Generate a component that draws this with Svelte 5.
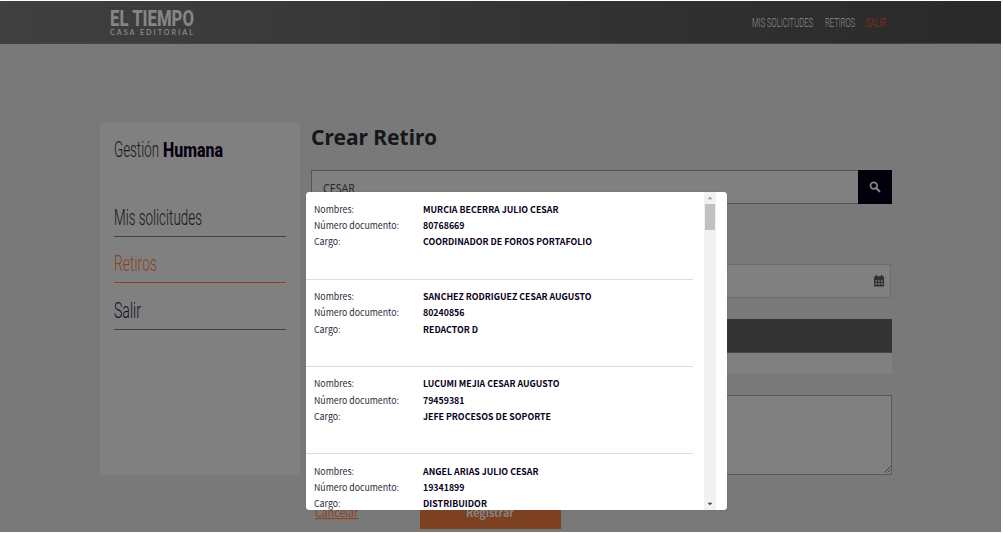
<script>
  const people = [
    { name: 'MURCIA BECERRA JULIO CESAR', nw: 135.5, doc: '80768669', job: 'COORDINADOR DE FOROS PORTAFOLIO', jw: 169 },
    { name: 'SANCHEZ RODRIGUEZ CESAR AUGUSTO', nw: 168.5, doc: '80240856', job: 'REDACTOR D', jw: 55 },
    { name: 'LUCUMI MEJIA CESAR AUGUSTO', nw: 136.5, doc: '79459381', job: 'JEFE PROCESOS DE SOPORTE', jw: 128 },
    { name: 'ANGEL ARIAS JULIO CESAR', nw: 115.5, doc: '19341899', job: 'DISTRIBUIDOR', jw: 64 },
  ];
</script>

{#snippet label(text, width, height, baseline, cls)}
  <svg class="label {cls}" {width} {height}>
    <text x="0" y={baseline} textLength={width} lengthAdjust="spacingAndGlyphs">{text}</text>
  </svg>
{/snippet}

<div class="page">
  <header>
    <div class="logo">
      {@render label('EL TIEMPO', 84, 19, 17, 'brand')}
      {@render label('CASA EDITORIAL', 85, 9, 6.8, 'tagline')}
    </div>
    <nav>
      {@render label('MIS SOLICITUDES', 61, 20, 14, 'nav')}
      {@render label('RETIROS', 30, 20, 14, 'nav')}
      {@render label('SALIR', 20, 20, 14, 'nav exit')}
    </nav>
  </header>

  <main>
    <aside>
      <h2>
        {@render label('Gestión', 45, 28, 21, 'side')}
        {@render label('Humana', 60, 28, 21, 'side strong')}
      </h2>
      <a class="item" href="#solicitudes">{@render label('Mis solicitudes', 88, 30, 21, 'side')}</a>
      <a class="item active" href="#retiros">{@render label('Retiros', 43, 30, 21, 'side')}</a>
      <a class="item navy" href="#salir">{@render label('Salir', 27, 30, 21, 'side')}</a>
    </aside>

    <section>
      <h1>{@render label('Crear Retiro', 126, 34, 22, 'title')}</h1>
      <div class="search">
        <div class="field">{@render label('CESAR', 32, 18, 13, 'value')}</div>
        <button aria-label="Buscar">
          <svg width="12" height="12" viewBox="0 0 12 12">
            <circle cx="4.8" cy="4.6" r="3.3" fill="none" stroke="#858585" stroke-width="1.8" />
            <path d="M7.2 7.1L10.4 10.3" stroke="#858585" stroke-width="2.1" stroke-linecap="round" />
          </svg>
        </button>
      </div>
      <div class="date">
        <svg width="10" height="12" viewBox="0 0 10 12">
          <path d="M0 2.2Q0 1.3 .9 1.3H1.8V0H3.2V1.3H6.8V0H8.2V1.3H9.1Q10 1.3 10 2.2V4H0ZM0 4H10V10.8Q10 11.6 9.2 11.6H.8Q0 11.6 0 10.8Z" fill="#303030" />
          <path d="M1.2 5.2H3.1V6.7H1.2ZM4.1 5.2H5.9V6.7H4.1ZM6.9 5.2H8.8V6.7H6.9ZM1.2 8.1H3.1V9.8H1.2ZM4.1 8.1H5.9V9.8H4.1ZM6.9 8.1H8.8V9.8H6.9Z" fill="#777" />
        </svg>
      </div>
      <div class="table-head"></div>
      <div class="table-row"></div>
      <div class="notes">
        <svg width="7" height="7" viewBox="0 0 7 7"><path d="M.5 6.5L6.5.5M3.5 6.5L6.5 3.5" stroke="#444" stroke-width="1" /></svg>
      </div>
      <div class="actions">
        <a href="#cancelar">{@render label('Cancelar', 43.5, 18, 13, 'cancel')}</a>
        <button>{@render label('Registrar', 48, 18, 13, 'submit')}</button>
      </div>
    </section>
  </main>

  <div class="modal">
    <div class="list">
      {#each people as p}
        <div class="person">
          <div class="line">{@render label('Nombres:', 40, 16, 11.5, 'key')}{@render label(p.name, p.nw, 16, 11.5, 'data')}</div>
          <div class="line">{@render label('Número documento:', 85, 16, 11.5, 'key')}{@render label(p.doc, 41.5, 16, 11.5, 'data')}</div>
          <div class="line">{@render label('Cargo:', 26.5, 16, 11.5, 'key')}{@render label(p.job, p.jw, 16, 11.5, 'data')}</div>
        </div>
      {/each}
    </div>
    <div class="scroll">
      <svg width="12" height="12"><path d="M3.5 7.3L6 4.8L8.5 7.3Z" fill="#999" /></svg>
      <div class="thumb"></div>
      <svg width="12" height="12"><path d="M3.5 4.8H8.5L6 7.3Z" fill="#444" /></svg>
    </div>
  </div>
</div>

<style>
  :global(body) { background: #fff; overflow: hidden; }
  * { box-sizing: border-box; }
  svg { display: block; flex: none; }
  a { text-decoration: none; }
  .label { overflow: visible; fill: currentColor; }
  .page { position: relative; width: 1003px; height: 533px; overflow: hidden; background: #797979; border: solid #fff; border-width: 1px 2px 1px 0; }
  header { height: 43px; display: flex; justify-content: space-between; padding: 8px 115px 0 110px; border-bottom: 1px solid #444; background: linear-gradient(90deg, #404040, #292929); }
  .brand { font: 800 22px Roboto, sans-serif; color: #858585; }
  .tagline { font: 700 6.5px Lato, sans-serif; letter-spacing: 1.8px; color: #858585; }
  nav { display: flex; gap: 11.5px; padding-top: 4px; color: #929292; }
  .nav { font: 300 12.5px Roboto, sans-serif; }
  .exit { color: #9a2f12; }
  main { display: flex; gap: 11px; padding: 79px 0 0 100px; }
  aside { width: 200px; height: 352px; background: #808080; padding: 13px 14px; color: #17171b; }
  h1, h2 { margin: 0; }
  h2 { display: flex; gap: 4px; height: 68px; }
  .side { font: 300 21.5px Roboto, sans-serif; }
  .side.strong { font-weight: 800; font-size: 20.5px; color: #04000e; }
  .item { display: block; height: 33px; margin-bottom: 13.3px; border-bottom: 1px solid #434343; color: #17171b; }
  .item.active { color: #8e421d; border-color: #8e421d; }
  .item.navy { color: #111129; }
  section { width: 581px; }
  h1 { height: 47px; color: #151719; }
  .title { font: 700 22px "Noto Sans", sans-serif; }
  .search { display: flex; height: 34px; }
  .field { flex: 1; border: 1px solid #555; border-right: 0; background: #808080; padding: 9px 11px; color: #292a2b; }
  .value { font: 400 12px "Noto Sans", sans-serif; }
  .search button { width: 34px; border: 0; background: #03000e; padding: 0 0 0 11px; }
  .date { height: 34px; width: 580px; margin-top: 60px; border: 1px solid #6c6c6c; background: #808080; display: flex; justify-content: flex-end; padding: 10px 6px 0 0; }
  .table-head { height: 34px; margin-top: 21px; background: #333; border-bottom: 1px solid #4a4545; }
  .table-row { height: 21px; background: #808080; }
  .notes { height: 80px; margin-top: 21px; border: 1px solid #595959; background: #808080; display: flex; justify-content: flex-end; align-items: flex-end; padding-bottom: 1px; }
  .actions { display: flex; height: 54px; align-items: flex-end; padding-left: 4px; }
  .actions a { width: 104.5px; padding-bottom: 7px; color: #8e421d; }
  .cancel { font: 400 11.5px "Noto Sans CJK SC", sans-serif; text-decoration: underline; }
  .actions button { width: 141px; height: 32px; border: 0; padding: 0 0 1px 46.5px; background: #7d4122; color: #858585; }
  .submit { font: 700 11px "Noto Sans CJK SC", sans-serif; }
  .modal { position: absolute; left: 305.5px; top: 190.5px; width: 421px; height: 318px; background: #fff; border-radius: 3px; display: flex; overflow: hidden; box-shadow: 0 0 1px #555; }
  .list { width: 387.5px; height: 318px; margin-right: 11px; overflow: hidden; }
  .person { height: 87.2px; padding: 8.7px 8.5px; border-bottom: 1px solid #ddd; }
  .person:first-child { height: 88px; padding-top: 9.4px; }
  .line { display: grid; grid-template-columns: 108.5px 1fr; height: 16.2px; }
  .key { font: 400 9.6px "Noto Sans CJK SC", sans-serif; color: #292a3a; }
  .data { font: 700 9.2px "Noto Sans CJK SC", sans-serif; color: #08001a; }
  .scroll { width: 12px; display: flex; flex-direction: column; background: #f1f1f1; }
  .thumb { width: 10px; height: 26px; margin: 0 1px auto; background: #c1c1c1; }
</style>
